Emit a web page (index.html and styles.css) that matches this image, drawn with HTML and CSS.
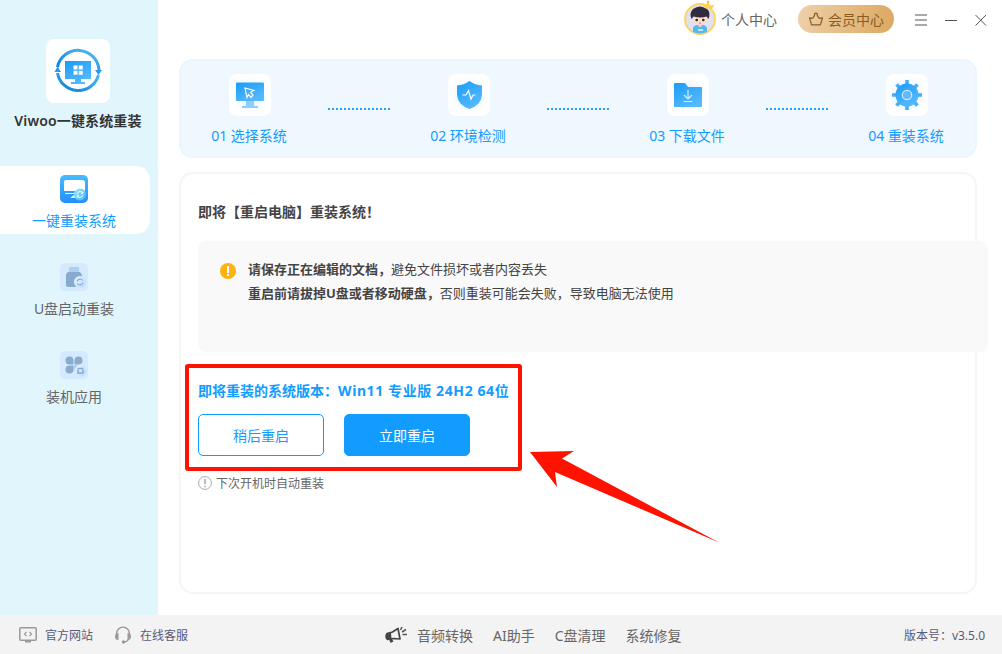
FILE: index.html
```html
<!DOCTYPE html>
<html lang="zh-CN">
<head>
    <meta charset="UTF-8">
    <meta name="viewport" content="width=device-width, initial-scale=1.0">
    <title>Viwoo一键系统重装</title>
    <link rel="stylesheet" href="styles.css">
</head>
<body>
    <div class="window">
        <aside class="sidebar">
            <div class="logo">
                <svg width="64" height="64" viewBox="0 0 64 64">
                    <defs>
                        <linearGradient id="blue" x1="0" y1="0" x2="0.6" y2="1">
                            <stop offset="0" stop-color="#189cf7"/>
                            <stop offset="1" stop-color="#57b9ff"/>
                        </linearGradient>
                        <linearGradient id="ring" x1="1" y1="0" x2="0" y2="1">
                            <stop offset="0" stop-color="#55baf7"/>
                            <stop offset="1" stop-color="#087fdc"/>
                        </linearGradient>
                    </defs>
                    <path d="M11.5 28A21 21 0 0 1 53 31" fill="none" stroke="url(#ring)" stroke-width="3"/>
                    <path d="M52.5 36A21 21 0 0 1 11.5 34" fill="none" stroke="url(#ring)" stroke-width="3"/>
                    <path d="M8.5 33L11.5 27.5L15 33ZM49 31H56L52.5 36Z" fill="#279ce9"/>
                    <path d="M19 22H45V40H35V43H39V45H25V43H29V40H19Z" fill="url(#blue)"/>
                    <path d="M27.5 26.5h4v4h-4zM32.7 26.5h4v4h-4zM27.5 31.7h4v4h-4zM32.7 31.7h4v4h-4z" fill="#fff"/>
                </svg>
            </div>
            <div class="app-name">Viwoo一键系统重装</div>
            <nav class="menu">
                <a class="menu-item active">
                    <svg width="28" height="28" viewBox="0 0 28 28">
                        <defs>
                            <linearGradient id="tile" x1="0" y1="0" x2="0" y2="1">
                                <stop offset="0" stop-color="#46bcff"/>
                                <stop offset="1" stop-color="#238fff"/>
                            </linearGradient>
                            <linearGradient id="badge" x1="0" y1="0" x2="1" y2="1">
                                <stop offset="0" stop-color="#a3e9f6"/>
                                <stop offset="1" stop-color="#3eb3fa"/>
                            </linearGradient>
                        </defs>
                        <rect width="28" height="28" rx="5" fill="url(#tile)"/>
                        <path d="M4 16V7Q4 5 6 5H22Q25 5 25 8V16Z" fill="#fff"/>
                        <path d="M5 18H17V19H8Q5 19.5 5 18ZM13 20.5H17V22H19V23H10.5Z" fill="#fff"/>
                        <circle cx="20" cy="19.5" r="6" fill="url(#badge)"/>
                        <path d="M17.3 18.8A3 3 0 0 1 22.8 18M22.8 16.5V18.3H21M22.8 20.2A3 3 0 0 1 17.3 21M17.3 22.5V20.8H19" fill="none" stroke="#fff"/>
                    </svg>
                    <span>一键重装系统</span>
                </a>
                <a class="menu-item">
                    <svg width="28" height="28" viewBox="0 0 28 28">
                        <defs>
                            <linearGradient id="pale" x1="0" y1="0" x2="1" y2="1">
                                <stop offset="0" stop-color="#e8f4ff"/>
                                <stop offset="1" stop-color="#b7d9ff"/>
                            </linearGradient>
                        </defs>
                        <rect width="28" height="28" rx="5" fill="#d5eaff"/>
                        <rect x="9" y="4" width="10" height="8" rx="1" fill="#aed0f0"/>
                        <path d="M8 9H20L22 12V24H8Q6 24 6 22V11Z" fill="#88abce"/>
                        <circle cx="20" cy="19" r="6" fill="url(#pale)"/>
                        <path d="M17.3 18.3A3 3 0 0 1 22.8 17.5M22.8 19.7A3 3 0 0 1 17.3 20.5" fill="none" stroke="#86acd0" stroke-width="1.2"/>
                    </svg>
                    <span>U盘启动重装</span>
                </a>
                <a class="menu-item">
                    <svg width="28" height="28" viewBox="0 0 28 28">
                        <rect width="28" height="28" rx="5" fill="#d5eaff"/>
                        <path d="M13.5 13.5H9.5A4 4 0 1 1 13.5 9.5ZM14.5 13.5V9.5A4 4 0 1 1 18.5 13.5ZM13.5 14.5V18.5A4 4 0 1 1 9.5 14.5ZM14.5 14.5H18.5A4 4 0 1 1 14.5 18.5Z" fill="#88abce"/>
                        <circle cx="20.5" cy="19.5" r="6" fill="url(#pale)"/>
                        <path d="M18 18.5V22H23V18.5M17.5 17.5H23.5" fill="none" stroke="#86acd0" stroke-width="1.5"/>
                    </svg>
                    <span>装机应用</span>
                </a>
            </nav>
        </aside>

        <main class="content">
            <header class="topbar">
                <svg class="avatar" width="34" height="36" viewBox="0 0 34 36">
                    <defs>
                        <clipPath id="face"><circle cx="16" cy="19" r="14.5"/></clipPath>
                    </defs>
                    <circle cx="16" cy="19" r="15" fill="#dfe0f0" stroke="#ffd466" stroke-width="2"/>
                    <g clip-path="url(#face)">
                        <path d="M9 34V28Q10 25 14 25H18Q22 25 23 28V34Z" fill="#55b9ec"/>
                        <path d="M13.5 24H18.5L17 27H15Z" fill="#f6cfc0"/>
                        <ellipse cx="16" cy="19" rx="7.5" ry="6" fill="#fbdccf"/>
                        <path d="M7.5 19Q5 13 9 9Q16 4 23 9Q27 12 24.5 19L22.5 16.5Q17 18.5 9.5 16.5Z" fill="#302c3e"/>
                        <circle cx="12.7" cy="20" r="1.3" fill="#35242d"/>
                        <circle cx="19.3" cy="20" r="1.3" fill="#35242d"/>
                        <path d="M15 23h2" stroke="#cf6f66"/>
                        <path d="M14 30h5" stroke="#b7e6ff" stroke-width="2"/>
                    </g>
                    <path d="M18.5 3L22 5L24 1.5L26 5.5L30.5 5L28 9L20 8Z" fill="#ffd24f"/>
                    <circle cx="24" cy="2" r="1.2" fill="#f7b82e"/>
                </svg>
                <span class="user-name">个人中心</span>
                <a class="vip">
                    <svg width="16" height="14" viewBox="0 0 16 14">
                        <path d="M3.5 12.8L1.5 5.8Q4 7 5.3 5.5L6.6 3.4A1.5 1.5 0 1 1 9.2 3.4L10.6 5.5Q12 7 14.5 5.8L12.4 12.8Z" fill="none" stroke="#8a5d1f" stroke-width="1.2" stroke-linejoin="round"/>
                    </svg>
                    会员中心
                </a>
                <svg class="win-btns" width="76" height="14" viewBox="0 0 76 14">
                    <path d="M1 2H13M1 7H13M1 12H13" stroke="#aaa" stroke-width="2"/>
                    <path d="M31 7.5H43" stroke="#555"/>
                    <path d="M61.5 2L72 12.5M72 2L61.5 12.5" stroke="#555"/>
                </svg>
            </header>

            <section class="steps">
                <div class="step">
                    <div class="step-icon">
                        <svg width="42" height="42" viewBox="0 0 42 42">
                            <rect x="7" y="8.5" width="28" height="18.5" rx="1" fill="url(#blue)"/>
                            <path d="M17 27H25V32H29V34H13V32H17Z" fill="#91ceff"/>
                            <path d="M16 14L25 16.5L21.5 18.5L24 21L22 23.5L19.5 20.5L18 23.5Z" fill="none" stroke="#fff" stroke-width="1.2"/>
                        </svg>
                    </div>
                    <span>01 选择系统</span>
                </div>
                <i class="dots"></i>
                <div class="step">
                    <div class="step-icon">
                        <svg width="42" height="42" viewBox="0 0 42 42">
                            <path d="M21.5 7Q27 11 34 11.5V21Q33 31 21.5 35Q10 31 9 21V11.5Q16 11 21.5 7Z" fill="url(#blue)"/>
                            <path d="M14.5 21H18L20.5 16.5L23 25L25 21H27.5" fill="none" stroke="#fff" stroke-width="1.2"/>
                        </svg>
                    </div>
                    <span>02 环境检测</span>
                </div>
                <i class="dots"></i>
                <div class="step">
                    <div class="step-icon">
                        <svg width="42" height="42" viewBox="0 0 42 42">
                            <path d="M7 10Q7 9 8 9H18L21 13H34Q35 13 35 14V32Q35 33 34 33H8Q7 33 7 32Z" fill="url(#blue)"/>
                            <path d="M21 16V24.5M17 21L21 25L25 21M16.5 27.5H25.5" fill="none" stroke="#d8efff" stroke-width="1.2"/>
                        </svg>
                    </div>
                    <span>03 下载文件</span>
                </div>
                <i class="dots"></i>
                <div class="step">
                    <div class="step-icon">
                        <svg width="42" height="42" viewBox="0 0 42 42">
                            <path d="M21 6V36M6 21H36M10.5 10.5L31.5 31.5M31.5 10.5L10.5 31.5" stroke="#48adf8" stroke-width="3.6"/>
                            <circle cx="21" cy="21" r="11.5" fill="url(#blue)"/>
                            <circle cx="21" cy="21" r="4.7" fill="#65b9fb" stroke="#cbeaff" stroke-width="1.2"/>
                        </svg>
                    </div>
                    <span>04 重装系统</span>
                </div>
            </section>

            <section class="panel">
                <h1>即将【重启电脑】重装系统！</h1>
                <div class="notice">
                    <span class="warn-icon"></span>
                    <div>
                        <p><b>请保存正在编辑的文档，</b>避免文件损坏或者内容丢失</p>
                        <p><b>重启前请拔掉U盘或者移动硬盘，</b>否则重装可能会失败，导致电脑无法使用</p>
                    </div>
                </div>
                <h2>即将重装的系统版本：<span class="os">Win11 专业版 24H2 64位</span></h2>
                <div class="buttons">
                    <button class="btn">稍后重启</button>
                    <button class="btn primary">立即重启</button>
                </div>
                <div class="tip">
                    <svg width="14" height="14" viewBox="0 0 14 14">
                        <circle cx="7" cy="7" r="6.4" fill="none" stroke="#aaa"/>
                        <path d="M7 3V8.3M7 9.8V11.2" stroke="#999" stroke-width="1.3"/>
                    </svg>
                    <span>下次开机时自动重装</span>
                </div>
            </section>
        </main>

        <footer class="footer">
            <div class="foot-left">
                <svg width="18" height="16" viewBox="0 0 18 16">
                    <rect x="0.8" y="0.8" width="16.4" height="12.4" rx="1" fill="none" stroke="#999" stroke-width="1.5"/>
                    <path d="M7.5 4.8L5.5 7L7.5 9.2M10.5 4.8L12.5 7L10.5 9.2" fill="none" stroke="#999" stroke-width="1.2"/>
                    <path d="M6 14.7H12" stroke="#999" stroke-width="1.6"/>
                </svg>
                <span>官方网站</span>
                <svg class="headset" width="18" height="18" viewBox="0 0 18 18">
                    <path d="M2.6 9V7.5A6.4 6.4 0 0 1 15.4 7.5V9" fill="none" stroke="#999" stroke-width="1.4"/>
                    <path d="M4.5 7V14Q1 14 1 10.5T4.5 7ZM13.5 7V14Q17 14 17 10.5T13.5 7Z" fill="#999"/>
                    <path d="M14.5 13Q13.5 16 10 16" fill="none" stroke="#999" stroke-width="1.2"/>
                    <circle cx="9.5" cy="16" r="1.7" fill="#999"/>
                </svg>
                <span>在线客服</span>
            </div>
            <div class="foot-links">
                <svg width="24" height="18" viewBox="0 0 24 18">
                    <path d="M3 7.5L8.5 6L14 2.5L16 13L9.5 12.5L3.5 13.5Q1 11 3 7.5Z" fill="none" stroke="#444" stroke-width="1.7" stroke-linejoin="round"/>
                    <path d="M2.5 8L7 6.5L7.5 12.5L9.5 15.5L6.5 17L5 13L3 13Z" fill="#444"/>
                    <path d="M16.5 4L18 1M18 6L22 3.5M18.5 8.5H23" stroke="#555" stroke-width="1.5"/>
                </svg>
                <a>音频转换</a>
                <a>AI助手</a>
                <a>C盘清理</a>
                <a>系统修复</a>
            </div>
            <div class="version">版本号：v3.5.0</div>
        </footer>
    </div>

    <!-- 红色标注 -->
    <div class="mark-box"></div>
    <svg class="mark-arrow" width="190" height="94" viewBox="0 0 190 94">
        <path d="M0 2L44 1L32 8.5L189 92.5L25 22L27 37Z" fill="#ff1200"/>
    </svg>
</body>
</html>
```
FILE: styles.css
```css
* {
    box-sizing: border-box;
}
body {
    margin: 0;
    font-family: "Noto Sans", "Noto Sans CJK SC", sans-serif;
    font-size: 14px;
    color: #666;
    background: #fff;
    white-space: nowrap;
    overflow: hidden;
}
.window {
    width: 1002px;
    height: 654px;
    display: grid;
    grid-template-columns: 158px minmax(0, 1fr);
    grid-template-rows: 615px 39px;
}

/* 侧边栏 */
.sidebar {
    background: #e1f5fd;
    padding-top: 39px;
}
.logo {
    width: 64px;
    height: 64px;
    margin: 0 auto 0 46px;
    background: #fff;
    border-radius: 8px;
}
.logo svg {
    display: block;
}
.app-name {
    width: 156px;
    margin-top: 8px;
    line-height: 20px;
    text-align: center;
    font-weight: 600;
    letter-spacing: 0.15px;
    color: #333;
}
.menu {
    margin-top: 35px;
    display: flex;
    flex-direction: column;
    gap: 20px;
}
.menu-item {
    width: 150px;
    height: 68px;
    padding: 9px 2px 0 0;
    border-radius: 0 14px 14px 0;
    display: flex;
    flex-direction: column;
    align-items: center;
    line-height: 20px;
}
.menu-item span {
    margin-top: 8px;
}
.menu-item.active {
    background: #fff;
    color: #129cff;
}

/* 顶部栏 */
.content {
    padding: 0 25px 0 21px;
}
.topbar {
    height: 59px;
    margin-right: -13px;
    padding-bottom: 19px;
    display: flex;
    align-items: center;
    justify-content: flex-end;
}
.avatar {
    margin-right: 3px;
    margin-top: -5px;
}
.user-name {
    margin-top: -2px;
    margin-right: 21px;
}
.vip {
    width: 96px;
    height: 28px;
    margin-top: -2px;
    margin-right: 20px;
    border-radius: 14px;
    background: linear-gradient(100deg, #eed0aa, #dda860);
    color: #8a5d1f;
    display: flex;
    align-items: center;
    justify-content: center;
    gap: 4px;
}

/* 步骤 */
.steps {
    height: 99px;
    padding: 13px 29px 0 28px;
    border: 2px solid #ebf5fd;
    border-radius: 14px;
    background: #f0f8ff;
    display: flex;
    justify-content: space-between;
}
.step {
    width: 80px;
    display: flex;
    flex-direction: column;
    align-items: center;
    line-height: 20px;
    color: #129cff;
}
.step-icon {
    width: 42px;
    height: 42px;
    margin: 0 0 10px 2px;
    border-radius: 8px;
    background: radial-gradient(#ddf0ff, #fff 65%);
}
.step-icon svg {
    display: block;
}
.dots {
    width: 62px;
    height: 2px;
    margin-top: 34px;
    background: repeating-linear-gradient(90deg, #28a2fa 0 2px, transparent 2px 4px);
}

/* 主面板 */
.panel {
    height: 422px;
    margin-top: 14px;
    padding: 28px 17px 0;
    border: 2px solid #f5f5f5;
    border-radius: 14px;
}
.panel h1, .panel h2 {
    margin: 0;
    font-size: 14px;
    line-height: 20px;
}
.panel h1 {
    color: #444;
}
.panel h2 {
    margin-top: 29px;
    color: #129cff;
}
.panel h2 .os {
    letter-spacing: 0.6px;
}
.notice {
    width: 790px;
    height: 111px;
    margin-top: 19px;
    padding: 16px 22px;
    border-radius: 8px;
    background: #f9f9f9;
    display: flex;
    gap: 12px;
    font-size: 13px;
    color: #444;
}
.notice p {
    margin: 0;
    line-height: 24px;
}
.warn-icon {
    width: 16px;
    height: 16px;
    margin-top: 6px;
    border-radius: 50%;
    background: linear-gradient(#fff, #fff) 50% 3px / 2px 7px no-repeat,
        linear-gradient(#fff, #fff) 50% 11px / 2px 2px no-repeat, #ffb30f;
}
.buttons {
    margin-top: 13px;
    display: flex;
    gap: 20px;
}
.btn {
    width: 126px;
    height: 42px;
    border: 1px solid #129cff;
    border-radius: 5px;
    background: #fff;
    color: #129cff;
    font: inherit;
}
.btn.primary {
    background: #129cff;
    color: #fff;
}
.tip {
    margin-top: 18px;
    display: flex;
    align-items: flex-start;
    gap: 4px;
    font-size: 12px;
    line-height: 18px;
}
.tip svg {
    margin-top: 2px;
}
.tip span {
    padding-top: 1px;
}

/* 底部 */
.footer {
    grid-column: 1 / 3;
    padding: 1px 17px 0 19px;
    background: #f3f3f3;
    display: flex;
    align-items: center;
    font-size: 12px;
    color: #5a5a78;
}
.foot-left {
    width: 365px;
    display: flex;
    align-items: center;
}
.foot-left span {
    margin-left: 8px;
}
.foot-left .headset {
    margin-left: 21px;
}
.foot-links {
    display: flex;
    align-items: center;
    gap: 20px;
    font-size: 14px;
    color: #666;
}
.foot-links svg {
    margin-right: -11px;
}
.version {
    margin-left: auto;
}

/* 标注 */
.mark-box {
    position: absolute;
    left: 185px;
    top: 364px;
    width: 337px;
    height: 107px;
    border: 4px solid #ff1200;
    border-radius: 3px;
}
.mark-arrow {
    position: absolute;
    left: 530px;
    top: 450px;
}
```
